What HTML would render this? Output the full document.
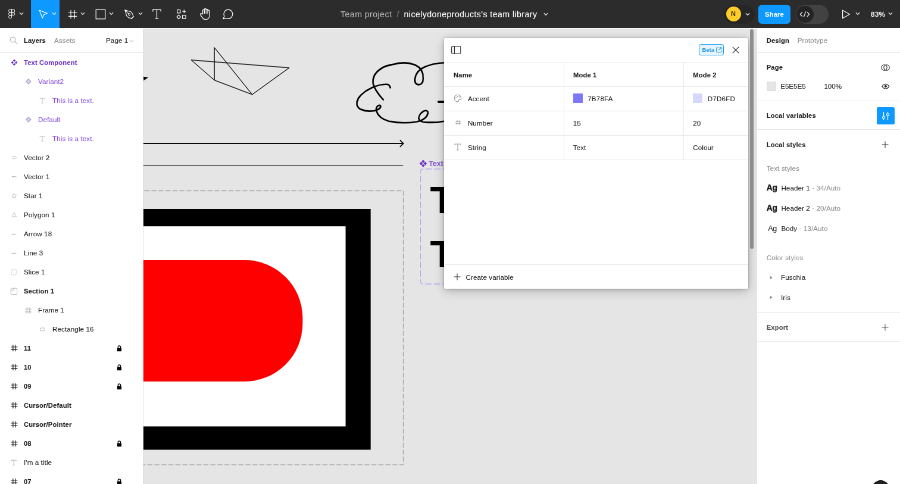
<!DOCTYPE html>
<html><head><meta charset="utf-8"><title>Figma</title>
<style>
*{box-sizing:border-box;margin:0;padding:0}
html,body{width:900px;height:484px;overflow:hidden;background:#e5e5e5;font-family:"Liberation Sans",sans-serif}
#cv{position:absolute;left:0;top:0;width:900px;height:484px;will-change:transform}
#ui{position:absolute;left:0;top:0;width:1512px;height:813px;transform:scale(.595238);transform-origin:0 0;will-change:transform;font-size:11.6px;letter-spacing:.1px;color:#1e1e1e}
#top{position:absolute;left:0;top:0;width:1512px;height:47.4px;background:#2c2c2c}
#left{position:absolute;left:0;top:48px;width:241px;height:765px;background:#fff;border-right:1px solid #dedede}
#right{position:absolute;left:1271px;top:48px;width:241px;height:765px;background:#fff;border-left:1px solid #dedede}
.abs{position:absolute}
.t{position:absolute;white-space:nowrap;line-height:16px;height:16px;margin-top:-8px;-webkit-text-stroke:.1px currentColor}
.b{font-weight:700;font-size:11.2px;letter-spacing:.15px}
.g{color:#8f8f8f}
.p{color:#8a52de}
.b.p{color:#7238c8}
.w{color:#fff}
.hr{position:absolute;left:0;width:100%;height:1px;background:#e6e6e6}
svg{position:absolute;overflow:visible}
.ic{fill:none;stroke:#fff;stroke-width:1.2}
</style></head><body>

<svg id="cv" viewBox="0 0 900 484">
<rect x="143" y="28" width="614" height="1" fill="#f4f4f4"/>
<path d="M191.2 60 L289.2 67.8 L252.2 94.5 L214.4 80.2 Z M214.4 80.2 L214.4 47.6 L252.2 94.5" stroke="#0c0c0c" stroke-width=".85" fill="none" stroke-linejoin="round"/>
<path d="M143 76.8 L148.3 77.6 L143.4 80.7Z" fill="#000"/>
<g fill="none" stroke="#000" stroke-width="1.6" stroke-linecap="round" stroke-linejoin="round">
<path d="M383.3 99.7 C378 94 374 88 373.1 83.4 C372 74 380 67 390.7 64.9 C399 62.5 408 62 415.3 64.9 C421 67.5 423.5 73 423.2 79 C423 83 421 85 418 84.6 C415 84 414.5 81 415 78.1 C416 73 420 69 424.5 67 C431 64 438 63 445 62.7"/>
<path d="M390.3 87.8 C390 85 388 84 385.4 84.3 C377 84.5 367 89 361 95 C356 100 355.5 106 360 109 C366 112 374 111.5 378 109.5 C381 108 381.5 105.5 379.5 105.3 C377 105.5 375.5 108 376.6 111.5 C378 116 383 119.5 389 121.2 C398 123 410 122.8 417 121.8 C423 120.5 427 117 428 113.3 C428.3 110.5 426 109.8 423 111.5 C420 113.5 418 117 419.3 119.8 C420.5 122 425 122.5 430 122.4 C436 122.4 441 121.8 445 121.2"/>
</g>
<path d="M438.5 101.8 H446" stroke="#000" stroke-width="2.2" stroke-linecap="round"/>
<path d="M143 143.5 H403.2 M399.9 140.2 L403.4 143.5 L399.9 146.8" stroke="#0a0a0a" stroke-width="1.05" fill="none"/>
<path d="M143 165.5 H403.1" stroke="#3a3a3a" stroke-width=".7"/>
<rect x="116.4" y="190.7" width="287" height="274" stroke="#999" stroke-dasharray="5 2" fill="none" stroke-width=".7"/>
<rect x="120" y="209" width="250.7" height="240.7" fill="#000"/>
<rect x="120" y="226.2" width="225.6" height="200.2" fill="#fff"/>
<path d="M120 260 H244.6 A58 58 0 0 1 302.6 318 V323.5 A58 58 0 0 1 244.6 381.5 H120Z" fill="#ff0000"/>
<path d="M420.5 173.6 V171.5 a2.5 2.5 0 0 1 2.5 -2.5 H470 M420.5 175.9 V281.5 a2.5 2.5 0 0 0 2.5 2.5 H470" stroke="#ad8ff2" stroke-dasharray="6.1 2.5" fill="none" stroke-width=".7"/>
<g fill="#6a30c2"><path d="M423.2 159.8l1.65 1.65 -1.65 1.65 -1.65 -1.65zM421.15 161.85l1.65 1.65 -1.65 1.65 -1.65 -1.65zM425.25 161.85l1.65 1.65 -1.65 1.65 -1.65 -1.65zM423.2 163.9l1.65 1.65 -1.65 1.65 -1.65 -1.65z"/></g>
<text x="428.8" y="166.3" font-size="7.3" font-weight="400" letter-spacing=".25" fill="#7444d0" stroke="#7444d0" stroke-width=".2" font-family="Liberation Sans, sans-serif">Text Component</text>
<text transform="translate(429.9 213.4) scale(1.14 1)" font-size="36.6" font-weight="700" fill="#000" font-family="Liberation Sans, sans-serif">This is a text.</text>
<text transform="translate(429.9 266.7) scale(1.14 1)" font-size="36.6" font-weight="700" fill="#000" font-family="Liberation Sans, sans-serif">This is a text.</text>
</svg>

<div id="ui">
<div class="abs" style="left:0;top:46px;width:241px;height:3px;background:#fff"></div><div class="abs" style="left:1271px;top:46px;width:241px;height:3px;background:#fff"></div>
<div id="left"><svg style="left:16px;top:13px" width="14" height="14" viewBox="0 0 14 14"><g fill="none" stroke="#b3b3b3" stroke-width="1.2"><circle cx="5.6" cy="5.6" r="4.2"/><path d="M8.7 8.7 L13 13"/></g></svg><div class="t b" style="left:40px;top:20px">Layers</div><div class="t g" style="left:91px;top:20px">Assets</div><div class="t" style="left:178px;top:20px">Page 1</div><svg style="left:216.5px;top:17.5px" width="8" height="6" viewBox="0 0 8 6"><path d="M.8 1.3 L4 4.3 L7.2 1.3" fill="none" stroke="#c6c6c6" stroke-width="1.1"/></svg><div class="hr" style="top:40px"></div><svg style="left:16.6px;top:50.3px" width="13.8" height="13.8" viewBox="0 0 16 16"><g fill="#6a30c2"><path d="M8 1.7l2.6 2.6L8 6.9 5.4 4.3zM4.3 5.4L6.9 8 4.3 10.6 1.7 8zM11.7 5.4l2.6 2.6-2.6 2.6L9.1 8zM8 9.1l2.6 2.6L8 14.3l-2.6-2.6z"/></g></svg><div class="t b p" style="left:40px;top:57.2px">Text Component</div><svg style="left:40.7px;top:82.4px" width="13.6" height="13.6" viewBox="0 0 16 16"><path d="M8 3.2L12.8 8 8 12.8 3.2 8z" fill="#d9cff0" stroke="#a999cf" stroke-width="1.3"/></svg><div class="t p" style="left:64px;top:89.2px">Variant2</div><svg style="left:64.3px;top:114px" width="14.4" height="14.4" viewBox="0 0 16 16"><path d="M3.5 5.2V3.5h9v1.7M8 3.5v9M6.3 12.5h3.4" fill="none" stroke="#c2c2c2" stroke-width="1"/></svg><div class="t p" style="left:88px;top:121.2px">This is a text.</div><svg style="left:40.7px;top:146.4px" width="13.6" height="13.6" viewBox="0 0 16 16"><path d="M8 3.2L12.8 8 8 12.8 3.2 8z" fill="#d9cff0" stroke="#a999cf" stroke-width="1.3"/></svg><div class="t p" style="left:64px;top:153.2px">Default</div><svg style="left:64.3px;top:178px" width="14.4" height="14.4" viewBox="0 0 16 16"><path d="M3.5 5.2V3.5h9v1.7M8 3.5v9M6.3 12.5h3.4" fill="none" stroke="#c2c2c2" stroke-width="1"/></svg><div class="t p" style="left:88px;top:185.2px">This is a text.</div><svg style="left:17.5px;top:211.2px" width="12" height="12" viewBox="0 0 16 16"><path d="M4 6c2-1.6 6-1.6 8 0 .8 2-.4 4-2.4 4.4-2.4.4-5 0-5.6-1.4-.4-1 0-2.2 0-3z" fill="none" stroke="#a8a8a8" stroke-width="1"/></svg><div class="t " style="left:40px;top:217.2px">Vector 2</div><svg style="left:17.5px;top:243.2px" width="12" height="12" viewBox="0 0 16 16"><path d="M3 7.5c2-1.5 3.5 1.5 5.5.5 1.5-.7 3 .3 4.5.3" fill="none" stroke="#a8a8a8" stroke-width="1.4"/></svg><div class="t " style="left:40px;top:249.2px">Vector 1</div><svg style="left:17.7px;top:275.4px" width="11.5" height="11.5" viewBox="0 0 16 16"><path d="M8 2.6l1.6 3.6 3.9.4-2.9 2.6.8 3.8L8 11l-3.4 2 .8-3.8-2.9-2.6 3.9-.4z" fill="none" stroke="#a8a8a8" stroke-width="1" stroke-linejoin="round"/></svg><div class="t " style="left:40px;top:281.2px">Star 1</div><svg style="left:17.7px;top:307.4px" width="11.5" height="11.5" viewBox="0 0 16 16"><path d="M8 3l5.2 9.4H2.8z" fill="none" stroke="#a8a8a8" stroke-width="1" stroke-linejoin="round"/></svg><div class="t " style="left:40px;top:313.2px">Polygon 1</div><svg style="left:17.1px;top:338.8px" width="12.8" height="12.8" viewBox="0 0 16 16"><path d="M3 8h10" stroke="#a8a8a8" stroke-width="1.2"/></svg><div class="t " style="left:40px;top:345.2px">Arrow 18</div><svg style="left:17.1px;top:370.8px" width="12.8" height="12.8" viewBox="0 0 16 16"><path d="M3 8h10" stroke="#a8a8a8" stroke-width="1.2"/></svg><div class="t " style="left:40px;top:377.2px">Line 3</div><svg style="left:17.1px;top:402.8px" width="12.8" height="12.8" viewBox="0 0 16 16"><rect x="2.5" y="2.5" width="11" height="11" rx="2" fill="none" stroke="#a8a8a8" stroke-width="1" stroke-dasharray="2.5 2"/></svg><div class="t " style="left:40px;top:409.2px">Slice 1</div><svg style="left:17.1px;top:434.8px" width="12.8" height="12.8" viewBox="0 0 16 16"><rect x="1.5" y="1.5" width="13" height="13" rx="2" fill="none" stroke="#a8a8a8" stroke-width="1"/><path d="M1.5 5.5H7.5V1.5" fill="none" stroke="#a8a8a8" stroke-width="1"/></svg><div class="t b" style="left:40px;top:441.2px">Section 1</div><svg style="left:39.9px;top:465.6px" width="15.2" height="15.2" viewBox="0 0 16 16"><path d="M5.5 2.5v11M10.5 2.5v11M2.5 5.5h11M2.5 10.5h11" stroke="#a8a8a8" stroke-width="1"/></svg><div class="t " style="left:64px;top:473.2px">Frame 1</div><svg style="left:65.1px;top:498.8px" width="12.8" height="12.8" viewBox="0 0 16 16"><rect x="3" y="5" width="10" height="6" rx="2" fill="none" stroke="#a8a8a8" stroke-width="1"/></svg><div class="t " style="left:88px;top:505.2px">Rectangle 16</div><svg style="left:16.5px;top:530.2px" width="14.1" height="14.1" viewBox="0 0 16 16"><path d="M5.5 2v12M10.5 2v12M2 5.5h12M2 10.5h12" stroke="#333" stroke-width="1.5"/></svg><div class="t b" style="left:40px;top:537.2px">11</div><svg style="left:194.6px;top:530.7px" width="10.8" height="12.6" viewBox="0 0 12 14"><path d="M3.6 6.5V4.4a2.4 2.4 0 0 1 4.8 0v2.1" fill="none" stroke="#000" stroke-width="1.4"/><rect x="2" y="6" width="8" height="6.5" rx=".8" fill="#000"/></svg><svg style="left:16.5px;top:562.2px" width="14.1" height="14.1" viewBox="0 0 16 16"><path d="M5.5 2v12M10.5 2v12M2 5.5h12M2 10.5h12" stroke="#333" stroke-width="1.5"/></svg><div class="t b" style="left:40px;top:569.2px">10</div><svg style="left:194.6px;top:562.7px" width="10.8" height="12.6" viewBox="0 0 12 14"><path d="M3.6 6.5V4.4a2.4 2.4 0 0 1 4.8 0v2.1" fill="none" stroke="#000" stroke-width="1.4"/><rect x="2" y="6" width="8" height="6.5" rx=".8" fill="#000"/></svg><svg style="left:16.5px;top:594.2px" width="14.1" height="14.1" viewBox="0 0 16 16"><path d="M5.5 2v12M10.5 2v12M2 5.5h12M2 10.5h12" stroke="#333" stroke-width="1.5"/></svg><div class="t b" style="left:40px;top:601.2px">09</div><svg style="left:194.6px;top:594.7px" width="10.8" height="12.6" viewBox="0 0 12 14"><path d="M3.6 6.5V4.4a2.4 2.4 0 0 1 4.8 0v2.1" fill="none" stroke="#000" stroke-width="1.4"/><rect x="2" y="6" width="8" height="6.5" rx=".8" fill="#000"/></svg><svg style="left:16.5px;top:626.2px" width="14.1" height="14.1" viewBox="0 0 16 16"><path d="M5.5 2v12M10.5 2v12M2 5.5h12M2 10.5h12" stroke="#333" stroke-width="1.5"/></svg><div class="t b" style="left:40px;top:633.2px">Cursor/Default</div><svg style="left:16.5px;top:658.2px" width="14.1" height="14.1" viewBox="0 0 16 16"><path d="M5.5 2v12M10.5 2v12M2 5.5h12M2 10.5h12" stroke="#333" stroke-width="1.5"/></svg><div class="t b" style="left:40px;top:665.2px">Cursor/Pointer</div><svg style="left:16.5px;top:690.2px" width="14.1" height="14.1" viewBox="0 0 16 16"><path d="M5.5 2v12M10.5 2v12M2 5.5h12M2 10.5h12" stroke="#333" stroke-width="1.5"/></svg><div class="t b" style="left:40px;top:697.2px">08</div><svg style="left:194.6px;top:690.7px" width="10.8" height="12.6" viewBox="0 0 12 14"><path d="M3.6 6.5V4.4a2.4 2.4 0 0 1 4.8 0v2.1" fill="none" stroke="#000" stroke-width="1.4"/><rect x="2" y="6" width="8" height="6.5" rx=".8" fill="#000"/></svg><svg style="left:16.3px;top:722px" width="14.4" height="14.4" viewBox="0 0 16 16"><path d="M3.5 5.2V3.5h9v1.7M8 3.5v9M6.3 12.5h3.4" fill="none" stroke="#a8a8a8" stroke-width="1"/></svg><div class="t " style="left:40px;top:729.2px">I'm a title</div><svg style="left:16.5px;top:754.2px" width="14.1" height="14.1" viewBox="0 0 16 16"><path d="M5.5 2v12M10.5 2v12M2 5.5h12M2 10.5h12" stroke="#333" stroke-width="1.5"/></svg><div class="t b" style="left:40px;top:761.2px">07</div><svg style="left:194.6px;top:754.7px" width="10.8" height="12.6" viewBox="0 0 12 14"><path d="M3.6 6.5V4.4a2.4 2.4 0 0 1 4.8 0v2.1" fill="none" stroke="#000" stroke-width="1.4"/><rect x="2" y="6" width="8" height="6.5" rx=".8" fill="#000"/></svg></div>
<div id="right"><div class="t b" style="left:15.7px;top:20px">Design</div><div class="t g" style="left:67.7px;top:20px">Prototype</div><div class="hr" style="top:39.5px"></div><div class="t b" style="left:15.7px;top:65.2px">Page</div><svg style="left:208.1px;top:59.900000000000006px" width="15" height="11" viewBox="0 0 15 11"><g fill="none" stroke="#333" stroke-width="1.1"><circle cx="5.5" cy="5.5" r="4.7"/><circle cx="9.5" cy="5.5" r="4.7"/></g></svg><div class="abs" style="left:15.7px;top:89.3px;width:16px;height:16px;background:#e5e5e5;box-shadow:inset 0 0 0 .5px #d4d4d4"></div><div class="t" style="left:39.2px;top:97.2px;letter-spacing:0">E5E5E5</div><div class="t" style="left:112.4px;top:97.2px;letter-spacing:0">100%</div><svg style="left:208.79999999999998px;top:92.10000000000001px" width="13.6" height="10.2" viewBox="0 0 16 12"><path d="M1 6c2-3.2 4.4-4.6 7-4.6S13 2.8 15 6c-2 3.2-4.4 4.6-7 4.6S3 9.2 1 6z" fill="none" stroke="#222" stroke-width="1.3"/><circle cx="8" cy="6" r="2.5" fill="#222"/></svg><div class="hr" style="top:121.2px"></div><div class="t b" style="left:15.7px;top:146.4px">Local variables</div><div class="abs" style="left:200.5px;top:131.8px;width:30px;height:29.5px;border-radius:2.5px;background:#0d99ff"></div><svg style="left:207.5px;top:138.60000000000002px" width="16" height="16" viewBox="0 0 16 16"><g fill="none" stroke="#fff" stroke-width="1.2"><path d="M4.5 1v7.2M4.5 12.4V15M11.5 1v2.4M11.5 7.6V15"/><circle cx="4.5" cy="10.3" r="2"/><circle cx="11.5" cy="5.5" r="2"/></g></svg><div class="hr" style="top:169.1px"></div><div class="t b" style="left:15.7px;top:194.9px">Local styles</div><svg style="left:208.7px;top:188.9px" width="12" height="12" viewBox="0 0 12 12"><path d="M6 .5v11M.5 6h11" stroke="#333" stroke-width="1.1"/></svg><div class="t g" style="left:15.7px;top:234.7px">Text styles</div><div class="t" style="left:15.7px;top:267.8px;font-weight:700;font-size:13.8px;-webkit-text-stroke:.5px #1e1e1e;letter-spacing:-.2px">Ag</div><div class="t" style="left:40.4px;top:268.3px">Header 1<span class="g"> · 34/Auto</span></div><div class="t" style="left:15.7px;top:301.9px;font-weight:700;font-size:13.8px;-webkit-text-stroke:.5px #1e1e1e;letter-spacing:-.2px">Ag</div><div class="t" style="left:40.4px;top:302.4px">Header 2<span class="g"> · 20/Auto</span></div><div class="t" style="left:15.7px;top:335.5px;font-size:12.5px;left:18.2px;letter-spacing:-.2px">Ag</div><div class="t" style="left:40.4px;top:336px">Body<span class="g"> · 13/Auto</span></div><div class="t g" style="left:15.7px;top:384.9px">Color styles</div><svg style="left:19.9px;top:414.7px" width="7" height="7" viewBox="0 0 6 6"><path d="M1.5 .6L4.9 3 1.5 5.4z" fill="#8c8c8c"/></svg><div class="t" style="left:40px;top:418.2px">Fuschia</div><svg style="left:19.9px;top:448px" width="7" height="7" viewBox="0 0 6 6"><path d="M1.5 .6L4.9 3 1.5 5.4z" fill="#8c8c8c"/></svg><div class="t" style="left:40px;top:451.5px">Iris</div><div class="hr" style="top:476.7px"></div><div class="t b" style="left:15.7px;top:502.2px;color:#555">Export</div><svg style="left:208.7px;top:496.2px" width="12" height="12" viewBox="0 0 12 12"><path d="M6 .5v11M.5 6h11" stroke="#555" stroke-width="1.1"/></svg><div class="hr" style="top:524.9px"></div><div class="abs" style="left:191.7px;top:759.4px;width:31px;height:31px;border-radius:50%;background:#1e1e1e"></div></div>
<div id="modal" class="abs" style="left:745.6px;top:63.8px;width:511.1px;height:420.8px;background:#fff;border-radius:2px;box-shadow:0 5px 18px rgba(0,0,0,.2),0 0 12px rgba(0,0,0,.12),0 1px 4px rgba(0,0,0,.1),0 0 0 .8px rgba(0,0,0,.1);overflow:hidden"><svg style="left:12.4px;top:13.4px" width="16.5" height="14" viewBox="0 0 16.5 14"><rect x=".7" y=".7" width="15.1" height="12.6" rx="1.5" fill="none" stroke="#333" stroke-width="1.2"/><path d="M5.4 .7v12.6" stroke="#333" stroke-width="1.2"/></svg><div class="abs" style="left:428.7px;top:10.4px;width:41.5px;height:18.8px;border:1px solid #0d99ff;border-radius:3.5px;background:#e5f4ff;color:#2b96ea;font-size:9.5px;font-weight:700;line-height:18.3px;padding-left:4.2px;letter-spacing:0">Beta</div><svg style="left:457.5px;top:15px" width="9.5" height="9.5" viewBox="0 0 10 10"><path d="M4 1H1.6a.8.8 0 0 0-.8.8v6.6a.8.8 0 0 0 .8.8h6.6a.8.8 0 0 0 .8-.8V6M6 .8h3.2V4M9 1L4.6 5.4" fill="none" stroke="#1b8fe6" stroke-width="1.1"/></svg><svg style="left:484.4px;top:14.2px" width="12" height="12" viewBox="0 0 12 12"><path d="M.8 .8l10.4 10.4M11.2 .8L.8 11.2" stroke="#222" stroke-width="1.2"/></svg><div class="hr" style="top:40.8px;background:#e9e9e9"></div><div class="hr" style="top:81.5px;background:#e9e9e9"></div><div class="hr" style="top:122.5px;background:#e9e9e9"></div><div class="hr" style="top:163.5px;background:#e9e9e9"></div><div class="hr" style="top:204.1px;background:#e9e9e9"></div><div class="hr" style="top:380.2px;background:#e9e9e9"></div><div class="abs" style="left:201.1px;top:40.8px;width:1px;height:163.3px;background:#e9e9e9"></div><div class="abs" style="left:402.7px;top:40.8px;width:1px;height:163.3px;background:#e9e9e9"></div><div class="t b" style="left:16.5px;top:62.2px">Name</div><div class="t b" style="left:217.4px;top:62.2px">Mode 1</div><div class="t b" style="left:418.7px;top:62.2px">Mode 2</div><svg style="left:15.899999999999999px;top:93.3px" width="16" height="16" viewBox="0 0 16 16"><path d="M8 2.2a5.8 5.8 0 1 0 0 11.6c1 0 1.4-.6 1.2-1.4-.3-1.2.4-2 1.6-2h1.4c1 0 1.6-.7 1.6-1.7C13.8 5 11.2 2.2 8 2.2z" fill="none" stroke="#9a9a9a" stroke-width="1.1"/><circle cx="5.3" cy="7" r=".9" fill="#9a9a9a"/><circle cx="7.6" cy="4.9" r=".9" fill="#9a9a9a"/><circle cx="10.5" cy="5.8" r=".9" fill="#9a9a9a"/></svg><div class="t" style="left:40.3px;top:102.5px">Accent</div><div class="abs" style="left:217.1px;top:93.3px;width:16px;height:16px;background:#7b78fa"></div><div class="t" style="left:241.6px;top:102.5px;letter-spacing:.2px">7B78FA</div><div class="abs" style="left:418.7px;top:93.3px;width:16px;height:16px;background:#d7d6fd"></div><div class="t" style="left:443.2px;top:102.5px;letter-spacing:.2px">D7D6FD</div><svg style="left:17.15px;top:135.55px" width="13.5" height="13.5" viewBox="0 0 16 16"><path d="M6.2 3L5 13M11 3L9.8 13M3 6.2h10.5M2.5 9.8H13" stroke="#9a9a9a" stroke-width="1.1" fill="none"/></svg><div class="t" style="left:40.3px;top:143.5px">Number</div><div class="t" style="left:217.1px;top:143.5px">15</div><div class="t" style="left:418.7px;top:143.5px">20</div><svg style="left:15.899999999999999px;top:175.3px" width="16" height="16" viewBox="0 0 16 16"><path d="M3 5V3h10v2M8 3v10M6.2 13h3.6" fill="none" stroke="#9a9a9a" stroke-width="1.1"/></svg><div class="t" style="left:40.3px;top:184.5px">String</div><div class="t" style="left:217.1px;top:184.5px">Text</div><div class="t" style="left:418.7px;top:184.5px">Colour</div><svg style="left:16.2px;top:395.2px" width="12" height="12" viewBox="0 0 12 12"><path d="M6 .5v11M.5 6h11" stroke="#333" stroke-width="1.1"/></svg><div class="t" style="left:37px;top:402.4px">Create variable</div></div><div class="abs" style="left:1258px;top:48px;width:13.4px;height:765px;background:#dcdcdc;opacity:.0"></div><div class="abs" style="left:1259.7px;top:49.2px;width:6px;height:369.1px;border-radius:3px;background:#8e8e8e"></div>
<div id="top"><div class="abs" style="left:52px;top:0;width:48px;height:47.4px;background:#0d99ff"></div><svg style="left:13.6px;top:15px" width="11.3" height="16.6" viewBox="0 0 14 20"><g class="ic" stroke-width="1.7">
<path d="M7 .6H3.8a3.1 3.1 0 0 0 0 6.2H7z"/><path d="M7 .6h3.2a3.1 3.1 0 0 1 0 6.2H7z"/>
<path d="M7 6.9H3.8a3.1 3.1 0 0 0 0 6.2H7z"/><circle cx="10.2" cy="10" r="3.1"/>
<path d="M7 13.2H3.8a3.1 3.1 0 1 0 3.2 3.1z"/></g></svg><svg style="left:31.5px;top:19.8px" width="8" height="6" viewBox="0 0 8 6"><path d="M.9 1.2 L4 4.5 L7.1 1.2" fill="none" stroke="#fff" stroke-width="1.15" opacity="1"/></svg><svg style="left:64px;top:15px" width="18" height="18" viewBox="0 0 18 18"><path class="ic" d="M2.2 2.2 L15.2 7.4 L9.6 9.7 L7.3 15.3Z" stroke-linejoin="round"/></svg><svg style="left:87px;top:19.8px" width="8" height="6" viewBox="0 0 8 6"><path d="M.9 1.2 L4 4.5 L7.1 1.2" fill="none" stroke="#fff" stroke-width="1.15" opacity="1"/></svg><svg style="left:114.3px;top:15.6px" width="16.4" height="16.4" viewBox="0 0 18 18"><path class="ic" stroke-width="1.3" d="M5.5 1v16M12.5 1v16M1 5.5h16M1 12.5h16"/></svg><svg style="left:135px;top:19.8px" width="8" height="6" viewBox="0 0 8 6"><path d="M.9 1.2 L4 4.5 L7.1 1.2" fill="none" stroke="#fff" stroke-width="1.15" opacity="1"/></svg><svg style="left:159.6px;top:14.8px" width="18" height="18" viewBox="0 0 18 18"><rect class="ic" x="1.2" y="1.2" width="15.6" height="15.6"/></svg><svg style="left:182.5px;top:19.8px" width="8" height="6" viewBox="0 0 8 6"><path d="M.9 1.2 L4 4.5 L7.1 1.2" fill="none" stroke="#fff" stroke-width="1.15" opacity="1"/></svg><svg style="left:208px;top:15px" width="18.4" height="18.4" viewBox="0 0 20 20"><g class="ic" stroke-linejoin="round" stroke-width="1.3">
<path d="M2 2 L12.6 5.2 C15.8 7.6 17.2 11 17 15 L15 17 C11 17.2 7.6 15.8 5.2 12.6Z"/><path d="M2 2 L9 9"/><circle cx="10" cy="10" r="1.6"/><path d="M13.5 18.3 L18.3 13.5"/></g></svg><svg style="left:231.5px;top:19.8px" width="8" height="6" viewBox="0 0 8 6"><path d="M.9 1.2 L4 4.5 L7.1 1.2" fill="none" stroke="#fff" stroke-width="1.15" opacity="1"/></svg><svg style="left:256.2px;top:15.4px" width="15" height="17" viewBox="0 0 15 17"><path class="ic" stroke-width="1.25" d="M.9 4.6V1.1h13.2v3.5M7.5 1.1v14.8M4.6 15.9h5.8"/></svg><svg style="left:296px;top:14.6px" width="18" height="18" viewBox="0 0 18 18"><g class="ic">
<rect x="1.6" y="1.6" width="5.2" height="5.2"/><path d="M13.3 1.2v6M10.3 4.2h6"/>
<path d="M4.2 10.2 L7.4 13.4 L4.2 16.6 L1 13.4Z"/><rect x="10.6" y="10.8" width="5.4" height="5.4"/></g></svg><svg style="left:333.5px;top:12px" width="22" height="22.5" viewBox="0 0 22 22"><g class="ic" stroke-linejoin="round" stroke-linecap="round">
<path d="M6.6 11.5V5.2a1.4 1.4 0 0 1 2.8 0V3.6a1.4 1.4 0 0 1 2.8 0v1a1.4 1.4 0 0 1 2.8 0v1.6a1.4 1.4 0 0 1 2.8 0v7.6c0 4.2-2.6 6.6-6.2 6.6-3 0-4.4-1.2-6-3.6L2.6 12.4c-.8-1.4 1-2.6 2.2-1.4z"/>
<path d="M9.4 5.2v5.2M12.2 4.6v5.8M15 6.2v4.4"/></g></svg><svg style="left:373px;top:14px" width="20" height="20" viewBox="0 0 20 20"><path class="ic" d="M10.4 2.2a7.6 7.6 0 1 1-3.3 14.5L2 17.6l1.9-4.3A7.6 7.6 0 0 1 10.4 2.2z" stroke-linejoin="round"/></svg><div class="t" style="left:572px;top:24px;font-size:14.2px;letter-spacing:.42px;color:#b3b3b3;line-height:18px;height:18px;margin-top:-9.5px">Team project</div><div class="t" style="left:666.5px;top:24px;font-size:15px;color:#7a7a7a;line-height:18px;height:18px;margin-top:-9px">/</div><div class="t w" style="left:678.5px;top:24px;font-size:14.2px;letter-spacing:.42px;line-height:18px;height:18px;margin-top:-9.5px">nicelydoneproducts's team library</div><svg style="left:913px;top:20.8px" width="8" height="6" viewBox="0 0 8 6"><path d="M.9 1.2 L4 4.5 L7.1 1.2" fill="none" stroke="#fff" stroke-width="1.15" opacity="1"/></svg><div class="abs" style="left:1216px;top:8px;width:52px;height:32px;border-radius:16px;background:#262626"></div><div class="abs" style="left:1219.5px;top:10.5px;width:25px;height:25px;border-radius:50%;background:#ffcd29;color:#3d2d00;font-weight:700;font-size:11px;line-height:25px;text-align:center">N</div><svg style="left:1251.5px;top:20.6px" width="8" height="6" viewBox="0 0 8 6"><path d="M.9 1.2 L4 4.5 L7.1 1.2" fill="none" stroke="#fff" stroke-width="1.15" opacity="1"/></svg><div class="abs w" style="left:1274px;top:8px;width:54px;height:31.5px;border-radius:6px;background:#0d99ff;font-weight:700;font-size:11.3px;line-height:33.5px;text-align:center">Share</div><div class="abs" style="left:1336.5px;top:8px;width:55px;height:31.5px;border-radius:16px;background:#424242"></div><div class="abs" style="left:1338px;top:9.5px;width:28.5px;height:28.5px;border-radius:50%;background:#242424"></div><svg style="left:1343px;top:18px" width="18" height="12" viewBox="0 0 18 12"><path class="ic" stroke-width="1.3" d="M5 2.2 L1.4 6 L5 9.8 M13 2.2 L16.6 6 L13 9.8 M10.6 1.4 L7.4 10.6"/></svg><svg style="left:1412px;top:15px" width="18" height="18" viewBox="0 0 18 18"><path class="ic" d="M3.6 2.2 L15.4 9 L3.6 15.8Z" stroke-linejoin="round"/></svg><svg style="left:1436.5px;top:19.8px" width="8" height="6" viewBox="0 0 8 6"><path d="M.9 1.2 L4 4.5 L7.1 1.2" fill="none" stroke="#fff" stroke-width="1.15" opacity="1"/></svg><div class="t w" style="left:1463px;top:24px;font-size:11.6px;font-weight:400;-webkit-text-stroke:.3px #fff;letter-spacing:.3px">83%</div><svg style="left:1491.5px;top:19.8px" width="8" height="6" viewBox="0 0 8 6"><path d="M.9 1.2 L4 4.5 L7.1 1.2" fill="none" stroke="#fff" stroke-width="1.15" opacity="1"/></svg></div>
</div>
</body></html>
